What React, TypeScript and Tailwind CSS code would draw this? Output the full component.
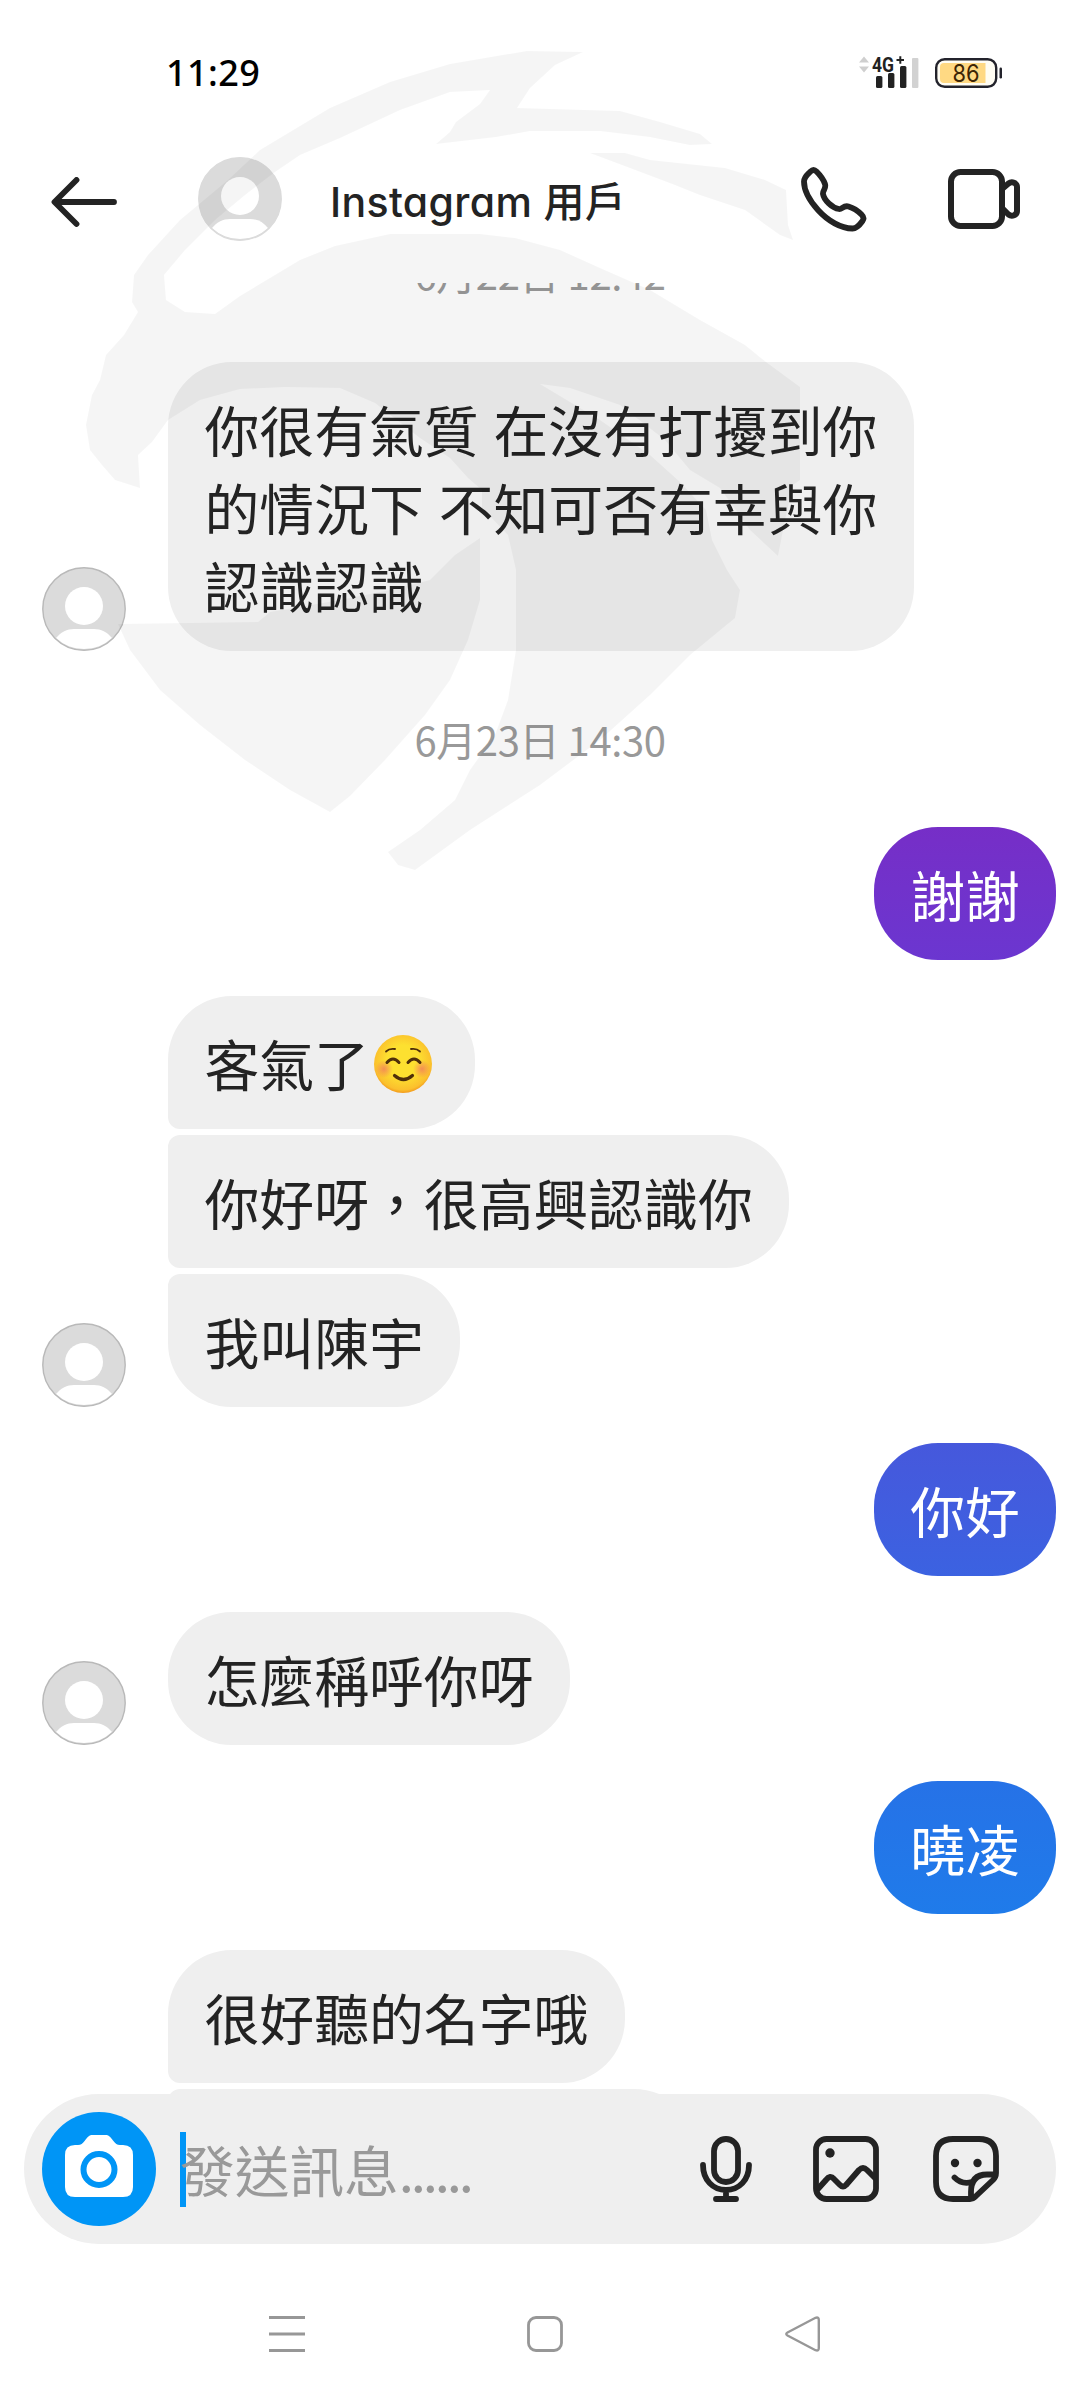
import React from "react";

type Message = {
  id: number;
  kind: "date" | "in" | "out";
  text: string;
  spacing: string;
  shape?: string;
  avatar?: boolean;
  emoji?: boolean;
};

const messages: Message[] = [
  { id: 1, kind: "date", text: "6月22日 12:42", spacing: "-mt-[34px]" },
  {
    id: 2,
    kind: "in",
    text: "你很有氣質 在沒有打擾到你\n的情況下 不知可否有幸與你\n認識認識",
    spacing: "mt-[65px]",
    shape: "w-[746px] rounded-[64px]",
    avatar: true,
  },
  { id: 3, kind: "date", text: "6月23日 14:30", spacing: "mt-[64px]" },
  {
    id: 4,
    kind: "out",
    text: "謝謝",
    spacing: "mt-[64px]",
    shape: "from-[#762ec7] to-[#6b36d0]",
  },
  {
    id: 5,
    kind: "in",
    text: "客氣了",
    spacing: "mt-[36px]",
    shape: "rounded-[64px] rounded-bl-[12px]",
    emoji: true,
  },
  {
    id: 6,
    kind: "in",
    text: "你好呀\uff0c很高興認識你",
    spacing: "mt-[6px]",
    shape: "rounded-[64px] rounded-l-[12px]",
  },
  {
    id: 7,
    kind: "in",
    text: "我叫陳宇",
    spacing: "mt-[6px]",
    shape: "rounded-[64px] rounded-tl-[12px]",
    avatar: true,
  },
  {
    id: 8,
    kind: "out",
    text: "你好",
    spacing: "mt-[36px]",
    shape: "from-[#4658dc] to-[#3b62e1]",
  },
  {
    id: 9,
    kind: "in",
    text: "怎麼稱呼你呀",
    spacing: "mt-[36px]",
    shape: "rounded-[64px]",
    avatar: true,
  },
  {
    id: 10,
    kind: "out",
    text: "曉凌",
    spacing: "mt-[36px]",
    shape: "from-[#2672e7] to-[#1f7bea]",
  },
  {
    id: 11,
    kind: "in",
    text: "很好聽的名字哦",
    spacing: "mt-[36px]",
    shape: "rounded-[64px] rounded-bl-[12px]",
  },
  {
    id: 12,
    kind: "in",
    text: "",
    spacing: "mt-[6px]",
    shape: "w-[530px] h-[133px] rounded-[64px] rounded-tl-[12px]",
  },
];

const Avatar: React.FC<{ ring: string }> = ({ ring }) => (
  <svg viewBox="0 0 84 84" className="size-[84px] shrink-0">
    <circle cx="42" cy="42" r="41.5" fill="#dbdbdb" />
    <circle cx="42" cy="39" r="19" fill="#fff" />
    <path
      d="M14 71C19 65 25 62 32 62H52C59 62 65 65 70 71A41 41 0 0 1 14 71Z"
      fill="#fff"
    />
    <circle cx="42" cy="42" r="41.2" fill="none" stroke={ring} strokeWidth="1.4" />
  </svg>
);

const SmileEmoji: React.FC = () => (
  <svg viewBox="0 0 58 58" className="mt-[4px] mr-[6px] ml-[5px] size-[58px]">
    <defs>
      <radialGradient id="face" cx="0.5" cy="0.45" r="0.55">
        <stop offset="0.5" stopColor="#fde030" />
        <stop offset="0.9" stopColor="#fbc02d" />
        <stop offset="1" stopColor="#f39b1c" />
      </radialGradient>
      <radialGradient id="blush">
        <stop offset="0" stopColor="#f2825a" stopOpacity="0.85" />
        <stop offset="1" stopColor="#f2825a" stopOpacity="0" />
      </radialGradient>
    </defs>
    <circle cx="29" cy="29" r="29" fill="url(#face)" />
    <circle cx="10" cy="34" r="9" fill="url(#blush)" />
    <circle cx="48" cy="34" r="9" fill="url(#blush)" />
    <g fill="none" stroke="#4e2f0a" strokeLinecap="round">
      <path d="M12 16.5Q15.5 13 21 14" strokeWidth="1.8" />
      <path d="M37 14Q42.5 13 46 16.5" strokeWidth="1.8" />
      <path d="M13 27.5Q19 20.5 25 27.5" strokeWidth="3" />
      <path d="M34 27.5Q40 20.5 46 27.5" strokeWidth="3" />
      <path d="M20.5 40.5Q29.5 48.5 38.5 40.5" strokeWidth="3.2" />
    </g>
  </svg>
);

const StatusBar: React.FC = () => (
  <div className="flex h-[100px] items-center pt-[45px] pl-[166px]">
    <span className="w-[101px] font-['Noto_Sans','Inter',sans-serif] text-[36px] leading-none font-medium tracking-[0.4px] text-black">
      11:29
    </span>
    <svg viewBox="0 0 150 40" className="ml-[588px] h-[40px] w-[150px]">
      <path d="M4 9.5L9 3.5L14 9.5ZM4 13.5L9 19.5L14 13.5Z" fill="#cfcfcf" />
      <text
        x="17"
        y="18.5"
        fontFamily="Roboto, sans-serif"
        fontSize="20"
        fontWeight="700"
        textLength="22"
        lengthAdjust="spacingAndGlyphs"
        fill="#222"
      >
        4G
      </text>
      <path d="M41.5 7H49M45.3 3.2V10.8" stroke="#222" strokeWidth="2" />
      <g fill="#222">
        <rect x="21" y="23" width="6.4" height="12" rx="1.5" />
        <rect x="33" y="20" width="6.4" height="15" rx="1.5" />
        <rect x="45" y="13" width="6.4" height="22" rx="1.5" />
      </g>
      <rect x="57" y="5" width="6.4" height="30" rx="1" fill="#d2d2d2" />
      <rect x="81.2" y="6.2" width="60" height="27.6" rx="8.5" fill="#fffdf3" stroke="#23232c" strokeWidth="2.4" />
      <path d="M89 10H130.5V30H89Q85 30 85 26V14Q85 10 89 10Z" fill="#ffd983" />
      <rect x="144.5" y="14.5" width="2.5" height="11" rx="1.2" fill="#23232c" />
      <text
        x="97.5"
        y="28.8"
        fontFamily="Inter, sans-serif"
        fontSize="24"
        textLength="27"
        lengthAdjust="spacingAndGlyphs"
        fill="#3d2505"
      >
        86
      </text>
    </svg>
  </div>
);

const ChatHeader: React.FC = () => (
  <header className="flex h-[183px] items-center pt-[15px] pr-[60px] pl-[51px]">
    <svg viewBox="0 0 66 50" className="mt-[6px] h-[50px] w-[66px]">
      <path
        d="M63 25H4M25.5 3L3.5 25L25.5 47"
        fill="none"
        stroke="#232323"
        strokeWidth="5.8"
        strokeLinecap="round"
        strokeLinejoin="round"
      />
    </svg>
    <div className="ml-[81px]">
      <Avatar ring="#dbdbdb" />
    </div>
    <h1 className="mt-[6px] ml-[48px] font-['Inter','Noto_Sans_CJK_TC',sans-serif] text-[41px] leading-none font-medium tracking-[0.35px] text-[#232323] [font-feature-settings:'cv11']">
      Instagram 用戶
    </h1>
    <svg viewBox="0 0 66 66" className="ml-auto size-[66px]">
      <path
        d="M9.5 5.5C11.5 3.5 13.5 3.5 15.5 5.5C19.5 9.5 22.5 13.5 24 18C25.5 23 21.5 24 22 28C23 34 31 42 38 43C41 43.5 42.5 39 47.5 40.5C52.5 42 56.5 44.5 60.5 48.5C63 51 63 53 61.5 55C59 58.5 56 62.5 51.5 62.5C40 62.5 27 55 17 44C8 34 3 24 3 15.5C3 11 6 9 9.5 5.5Z"
        fill="none"
        stroke="#232323"
        strokeWidth="5.8"
        strokeLinejoin="round"
      />
    </svg>
    <svg viewBox="0 0 72 60" className="ml-[81px] h-[60px] w-[72px]">
      <g fill="none" stroke="#232323" strokeWidth="6" strokeLinejoin="round">
        <rect x="3" y="3" width="51" height="54" rx="9.5" />
        <path d="M54 20L60.5 14.5C64 12 69 14 69 18V42C69 46 64 48 60.5 45.5L54 39" />
      </g>
    </svg>
  </header>
);

const Composer: React.FC = () => (
  <div className="mx-[24px] flex h-[150px] items-center rounded-full bg-[#efefef] pr-[57px] pl-[18px]">
    <button className="flex size-[114px] items-center justify-center rounded-full bg-[#0095f6]">
      <svg viewBox="0 0 68 62" className="mt-[-6px] h-[62px] w-[68px]">
        <path
          d="M10 10H13C16 10 17.5 8.5 20 5.5C22.5 2 24 0 28 0H40C44 0 45.5 2 48 5.5C50.5 8.5 52 10 55 10H58Q68 10 68 20V52Q68 62 58 62H10Q0 62 0 52V20Q0 10 10 10Z"
          fill="#fff"
        />
        <circle cx="34" cy="34.5" r="15.5" fill="none" stroke="#0095f6" strokeWidth="6" />
      </svg>
    </button>
    <span className="ml-[24px] h-[75px] w-[6px] bg-[#0095f6]" />
    <span className="-ml-[6px] pt-[1px] font-['Noto_Sans_CJK_TC',sans-serif] text-[54.7px] leading-none text-[#999]">
      發送訊息<span className="tracking-[-3.2px]">......</span>
    </span>
    <svg viewBox="0 0 52 66" className="ml-auto h-[66px] w-[52px]">
      <g fill="none" stroke="#232323" strokeWidth="5.8" strokeLinecap="round">
        <rect x="14" y="3" width="24" height="43" rx="12" />
        <path d="M3 29C3 44 13 54 26 54S49 44 49 29M26 54V63M16 63H36" />
      </g>
    </svg>
    <svg viewBox="0 0 66 66" className="ml-[61px] size-[66px]">
      <g fill="none" stroke="#232323" strokeWidth="5.8" strokeLinejoin="round">
        <rect x="3" y="3" width="60" height="60" rx="10.5" />
        <path d="M4 54L13 44Q17 38.5 21 43L27 49Q30 52 33 49L46 34Q50 30 54 34L63 43" />
      </g>
      <circle cx="17" cy="17" r="4.7" fill="#232323" />
    </svg>
    <svg viewBox="0 0 66 66" className="ml-[54px] size-[66px]">
      <g fill="none" stroke="#232323" strokeWidth="5.8" strokeLinecap="round" strokeLinejoin="round">
        <path d="M37 63H20Q3 63 3 46V20Q3 3 20 3H46Q63 3 63 20V37Q63 41 60 44L43 60Q40 63 37 63Z" />
        <path d="M38 62V56Q38 38.5 54 38.5H62" />
        <path d="M21.5 41.5Q29 49 39 46" />
      </g>
      <circle cx="22" cy="27" r="4.2" fill="#232323" />
      <circle cx="44.5" cy="27" r="4.2" fill="#232323" />
    </svg>
  </div>
);

const NavBar: React.FC = () => (
  <nav className="flex h-[156px] items-center gap-[222px] pt-[24px] pl-[269px]">
    <svg viewBox="0 0 36 36" className="size-[36px]">
      <path d="M0 1.5H36M0 18H36M0 34.5H36" stroke="#979797" strokeWidth="3" />
    </svg>
    <svg viewBox="0 0 36 36" className="size-[36px]">
      <rect x="1.5" y="1.5" width="33" height="33" rx="7.5" fill="none" stroke="#979797" strokeWidth="2.8" />
    </svg>
    <svg viewBox="0 0 36 36" className="size-[36px]">
      <path
        d="M2.5 16.5L30.5 1.8Q33.8 0.5 33.8 4V32Q33.8 35.5 30.5 34.2L2.5 19.5Q0 18 2.5 16.5Z"
        fill="none"
        stroke="#979797"
        strokeWidth="2.4"
      />
    </svg>
  </nav>
);

// Faint eagle head laid over the whole screen
const Watermark: React.FC = () => (
  <svg
    viewBox="0 0 1080 2400"
    className="pointer-events-none absolute inset-0 h-[2400px] w-[1080px]"
  >
    <g fill="#000" fillOpacity="0.04">
      <path d="M583 52L527 51L450 64L390 82L330 108L260 150L228 180L180 220L148 255L134 275L132 302L138 312L124 335L106 355L100 380L92 395L86 425L90 450L102 465L115 480L140 488L138 455L152 442L168 420L200 400L240 389L285 387L340 388L375 403L420 438L450 458L468 478L482 490L482 508L508 535L516 570L516 650L508 700L495 735L470 770L455 800L420 830L388 852L398 865L415 870L470 830L540 785L600 740L650 695L690 655L735 618L740 590L727 570L712 540L706 510L680 482L650 455L600 420L540 384L570 388L620 405L665 440L690 470L720 488L750 530L778 556L785 520L793 485L800 480L800 387L766 362L745 345L700 320L650 290L600 268L560 250L515 238L480 234L390 234L335 246L300 260L270 278L240 296L215 314L185 312L166 300L164 275L185 250L215 220L245 195L275 172L300 155L340 138L400 110L450 92L490 90L480 104L456 122L450 132L436 144L496 137L530 131L600 131L650 137L690 145L712 144L700 134L660 122L620 111L517 108L530 88L555 65Z" />
      <path d="M480 538L455 555L430 580L390 590L340 600L270 612L258 622L118 624L130 650L160 690L200 725L245 760L290 790L330 812L350 796L385 760L425 715L450 680L468 640L480 600Z" />
      <path d="M590 153L625 153L650 160L725 168L765 180L786 190L788 225L793 240L780 235L745 210L700 195L675 185L630 168Z" />
    </g>
  </svg>
);

const MessageRow: React.FC<{ message: Message }> = ({ message }) => {
  const { kind, text, spacing, shape, avatar, emoji } = message;

  if (kind === "date") {
    return (
      <p
        className={`${spacing} h-[48px] text-center font-['Noto_Sans_CJK_TC',sans-serif] text-[40px] leading-[48px] tracking-[-0.4px] text-[#999]`}
      >
        {text}
      </p>
    );
  }

  if (kind === "out") {
    return (
      <div className={`${spacing} flex justify-end pr-[24px]`}>
        <div
          className={`${shape} flex h-[133px] w-[182px] items-center justify-center rounded-[64px] bg-linear-to-b pb-[2px] text-white`}
        >
          {text}
        </div>
      </div>
    );
  }

  return (
    <div className={`${spacing} flex items-end pl-[42px]`}>
      <div className="mr-[42px] w-[84px] shrink-0">
        {avatar && <Avatar ring="#b9b9b9" />}
      </div>
      <div
        className={`${shape} flex items-center bg-[#efefef] px-[36.5px] pt-[27px] pb-[28px] [word-spacing:2.5px] whitespace-pre text-[#232323]`}
      >
        {text}
        {emoji && <SmileEmoji />}
      </div>
    </div>
  );
};

const App: React.FC = () => {
  return (
    <div className="relative flex h-[2400px] w-[1080px] flex-col overflow-hidden bg-white">
      <StatusBar />
      <ChatHeader />
      <main
        lang="zh-Hant"
        className="h-[1811px] overflow-hidden font-['Noto_Sans_CJK_TC',sans-serif] text-[54.85px] leading-[78px]"
      >
        {messages.map((message) => (
          <MessageRow key={message.id} message={message} />
        ))}
      </main>
      <Composer />
      <NavBar />
      <Watermark />
    </div>
  );
};

export default App;
